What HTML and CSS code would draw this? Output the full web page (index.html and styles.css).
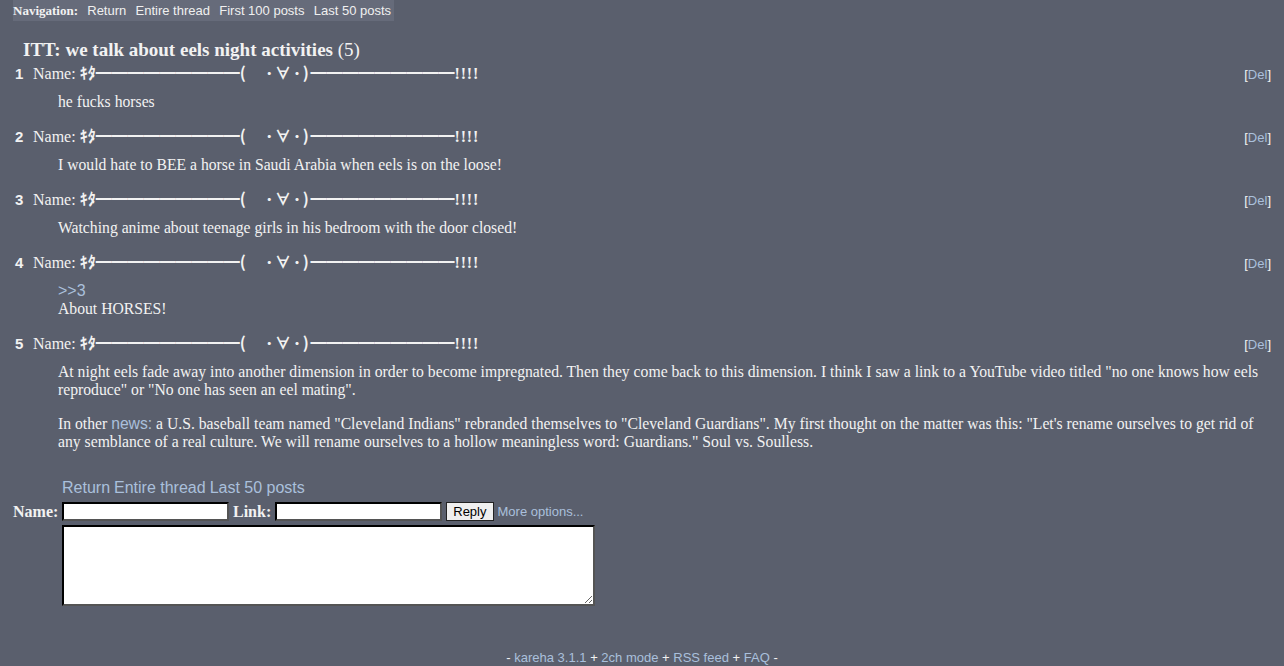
FILE: index.html
```html
<!DOCTYPE html>
<html lang="en">

<head>
  <meta charset="UTF-8">
  <title>ITT: we talk about eels night activities</title>
  <link rel="stylesheet" href="styles.css">
</head>

<body>
  <div id="navigation">
    <strong>Navigation:</strong>
    <a href="#">Return</a>
    <a href="#">Entire thread</a>
    <a href="#">First 100 posts</a>
    <a href="#">Last 50 posts</a>
  </div>

  <div class="thread">
    <h2>ITT: we talk about eels night activities <small>(5)</small></h2>

    <!-- Posts -->
    <div class="reply">
      <h3>
        <span class="replynum">1</span>
        Name: <span class="postername"><span class="kao">ｷﾀ━━━━━━━━━<span class="face">(　･∀･)</span>━━━━━━━━━</span><span class="bang">!!!!</span></span>
        <span class="deletebutton">[<a href="#">Del</a>]</span>
      </h3>
      <div class="replytext">
        <p>he fucks horses</p>
      </div>
    </div>

    <div class="reply">
      <h3>
        <span class="replynum">2</span>
        Name: <span class="postername"><span class="kao">ｷﾀ━━━━━━━━━<span class="face">(　･∀･)</span>━━━━━━━━━</span><span class="bang">!!!!</span></span>
        <span class="deletebutton">[<a href="#">Del</a>]</span>
      </h3>
      <div class="replytext">
        <p>I would hate to BEE a horse in Saudi Arabia when eels is on the loose!</p>
      </div>
    </div>

    <div class="reply">
      <h3>
        <span class="replynum">3</span>
        Name: <span class="postername"><span class="kao">ｷﾀ━━━━━━━━━<span class="face">(　･∀･)</span>━━━━━━━━━</span><span class="bang">!!!!</span></span>
        <span class="deletebutton">[<a href="#">Del</a>]</span>
      </h3>
      <div class="replytext">
        <p>Watching anime about teenage girls in his bedroom with the door closed!</p>
      </div>
    </div>

    <div class="reply">
      <h3>
        <span class="replynum">4</span>
        Name: <span class="postername"><span class="kao">ｷﾀ━━━━━━━━━<span class="face">(　･∀･)</span>━━━━━━━━━</span><span class="bang">!!!!</span></span>
        <span class="deletebutton">[<a href="#">Del</a>]</span>
      </h3>
      <div class="replytext">
        <p><a class="backlink" href="#">&gt;&gt;3</a><br>About HORSES!</p>
      </div>
    </div>

    <div class="reply">
      <h3>
        <span class="replynum">5</span>
        Name: <span class="postername"><span class="kao">ｷﾀ━━━━━━━━━<span class="face">(　･∀･)</span>━━━━━━━━━</span><span class="bang">!!!!</span></span>
        <span class="deletebutton">[<a href="#">Del</a>]</span>
      </h3>
      <div class="replytext">
        <p>At night eels fade away into another dimension in order to become impregnated. Then they come back to this dimension. I think I saw a link to a YouTube video titled "no one knows how eels reproduce" or "No one has seen an eel mating".</p>
        <p>In other <a href="#">news:</a> a U.S. baseball team named "Cleveland Indians" rebranded themselves to "Cleveland Guardians". My first thought on the matter was this: "Let's rename ourselves to get rid of any semblance of a real culture. We will rename ourselves to a hollow meaningless word: Guardians." Soul vs. Soulless.</p>
      </div>
    </div>

    <!-- Formulaire de réponse -->
    <form class="postform">
      <div></div>
      <div class="threadlinks">
        <a href="#">Return</a> <a href="#">Entire thread</a> <a href="#">Last 50 posts</a>
      </div>
      <label for="field1">Name:</label>
      <div class="fieldrow">
        <input type="text" id="field1" class="field">
        <label for="field2">Link:</label>
        <input type="text" id="field2" class="field">
        <input type="submit" class="replybutton" value="Reply">
        <a class="moreoptions" href="#">More options...</a>
      </div>
      <div></div>
      <textarea class="comment"></textarea>
    </form>
  </div>

  <footer>
    - <a href="#">kareha 3.1.1</a> + <a href="#">2ch mode</a> + <a href="#">RSS feed</a> + <a href="#">FAQ</a> -
  </footer>
</body>
</html>
```

FILE: styles.css
```css
html,
body {
  margin: 0;
  padding: 0;
}

body {
  background-color: #5a5f6d;
  color: #f2f2f2;
  font-family: "Liberation Serif", "Noto Sans CJK JP", serif;
  font-size: 16px;
  padding: 0 13px;
}

a {
  color: #aac0dc;
  text-decoration: none;
  font-family: "Liberation Sans", Arial, sans-serif;
}

a:hover {
  text-decoration: underline;
}

#navigation {
  width: fit-content;
  background-color: #666b7a;
  padding: 3px 3px 2px 0;
  font-size: 13px;
  line-height: 16px;
}

#navigation a {
  color: #f0f0f0;
  margin-left: 6px;
}

.thread h2 {
  font-size: 19px;
  line-height: 22px;
  margin: 18px 0 1px 10px;
}

.thread h2 small {
  font-size: 19px;
  font-weight: normal;
}

.reply h3 {
  display: flex;
  align-items: baseline;
  height: 20px;
  font-size: 16px;
  font-weight: normal;
  line-height: 20px;
  margin: 0;
}

.replynum {
  font-family: "Liberation Sans", Arial, sans-serif;
  font-weight: bold;
  font-size: 15px;
  width: 18px;
  padding-left: 2px;
}

.postername {
  font-weight: bold;
  margin-left: 4px;
}

.kao {
  font-family: "Noto Sans CJK JP", sans-serif;
}

.face {
  letter-spacing: 1.8px;
}

.bang {
  letter-spacing: 0.8px;
}

.deletebutton {
  margin-left: auto;
  font-family: "Liberation Sans", Arial, sans-serif;
  font-size: 13px;
}

.replytext {
  padding: 11px 0 0 45px;
}

.replytext p {
  margin: 0 0 16px;
  font-size: 15.7px;
  line-height: 18px;
}

.replytext p:last-child {
  margin-bottom: 14px;
}

.backlink {
  font-size: 16px;
}

.postform {
  display: grid;
  grid-template-columns: 49px auto;
  row-gap: 4px;
  margin-top: 28px;
  justify-items: start;
}

.postform > label {
  font-weight: bold;
  line-height: 19px;
}

.threadlinks {
  font-size: 16px;
  line-height: 18px;
  margin-bottom: 1px;
}

.fieldrow {
  display: flex;
  align-items: center;
  gap: 4px;
  font-weight: bold;
}

.field {
  width: 159px;
  height: 13px;
  border: 2px inset #000;
  padding: 1px 2px;
  margin: 0;
  background: white;
}

.replybutton {
  font-family: "Liberation Sans", Arial, sans-serif;
  font-size: 13px;
  height: 19px;
  padding: 0 6px;
  margin: 0;
  background: #efefef;
  border: 1px solid #222;
  color: #000;
}

.moreoptions {
  font-size: 13px;
  font-weight: normal;
}

.comment {
  width: 527px;
  height: 75px;
  margin: 0;
  border: 2px inset #000;
  padding: 1px;
  background: white;
  resize: both;
}

footer {
  text-align: center;
  font-family: "Liberation Sans", Arial, sans-serif;
  font-size: 13px;
  margin-top: 44px;
  padding-bottom: 10px;
}
```
